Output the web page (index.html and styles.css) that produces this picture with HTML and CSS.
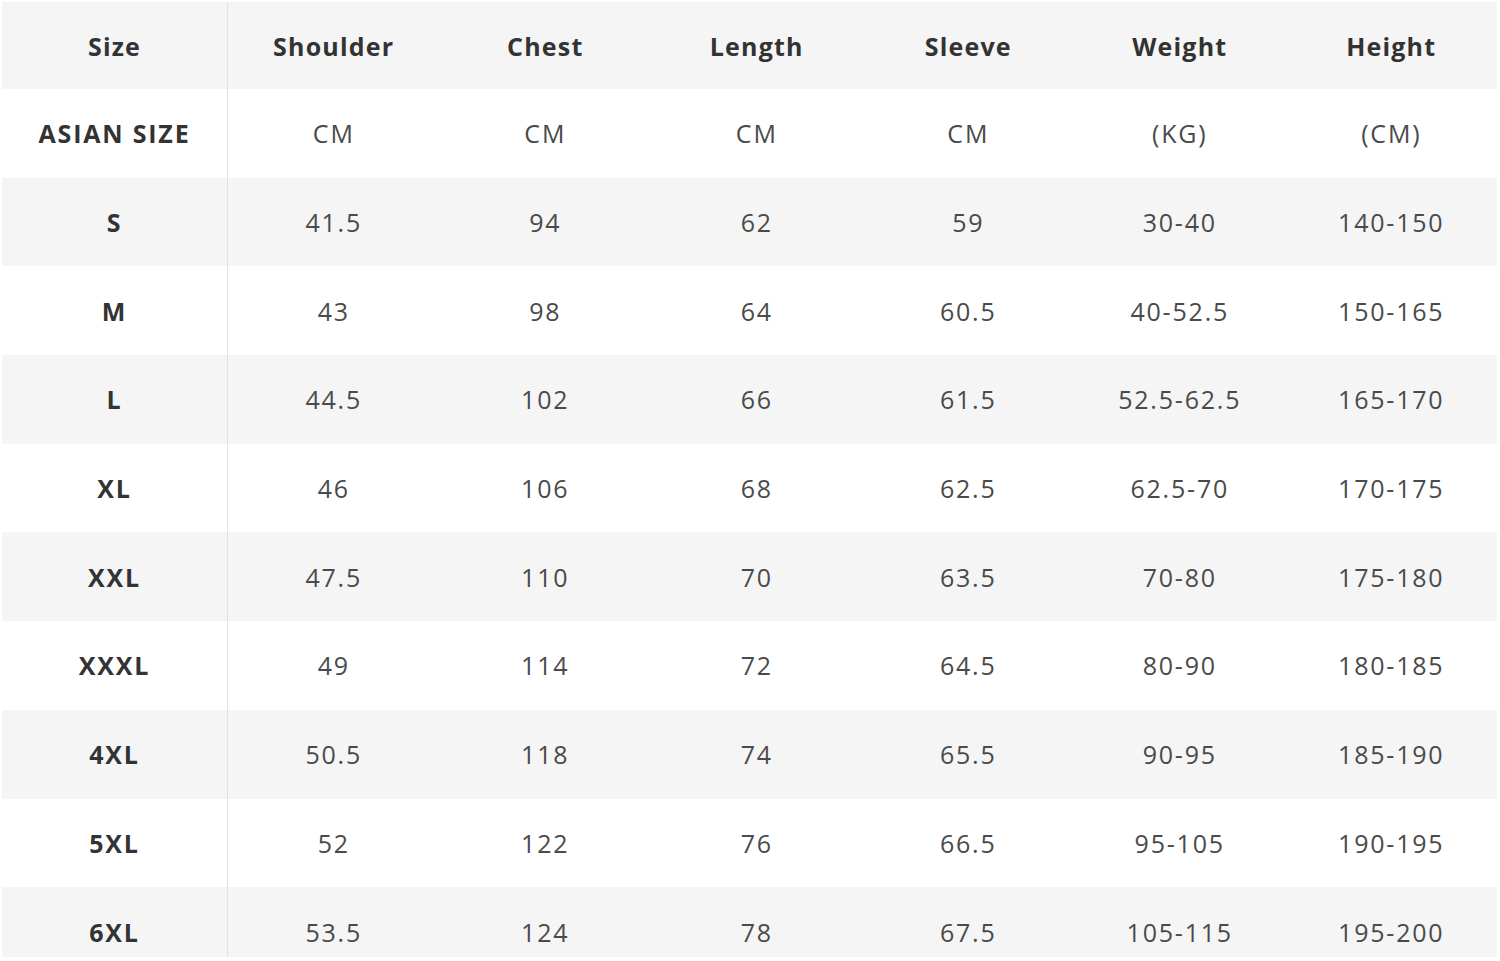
FILE: index.html
```html
<!DOCTYPE html>
<html>
<head>
<meta charset="utf-8">
<link rel="stylesheet" href="styles.css">
</head>
<body>
<div class="chart">
  <div class="row head">
    <div class="cell key">Size</div><div class="cell">Shoulder</div><div class="cell">Chest</div><div class="cell">Length</div><div class="cell">Sleeve</div><div class="cell">Weight</div><div class="cell">Height</div>
  </div>
  <div class="row">
    <div class="cell key">ASIAN SIZE</div><div class="cell">CM</div><div class="cell">CM</div><div class="cell">CM</div><div class="cell">CM</div><div class="cell">(KG)</div><div class="cell">(CM)</div>
  </div>
  <div class="row">
    <div class="cell key">S</div><div class="cell">41.5</div><div class="cell">94</div><div class="cell">62</div><div class="cell">59</div><div class="cell">30-40</div><div class="cell">140-150</div>
  </div>
  <div class="row">
    <div class="cell key">M</div><div class="cell">43</div><div class="cell">98</div><div class="cell">64</div><div class="cell">60.5</div><div class="cell">40-52.5</div><div class="cell">150-165</div>
  </div>
  <div class="row">
    <div class="cell key">L</div><div class="cell">44.5</div><div class="cell">102</div><div class="cell">66</div><div class="cell">61.5</div><div class="cell">52.5-62.5</div><div class="cell">165-170</div>
  </div>
  <div class="row">
    <div class="cell key">XL</div><div class="cell">46</div><div class="cell">106</div><div class="cell">68</div><div class="cell">62.5</div><div class="cell">62.5-70</div><div class="cell">170-175</div>
  </div>
  <div class="row">
    <div class="cell key">XXL</div><div class="cell">47.5</div><div class="cell">110</div><div class="cell">70</div><div class="cell">63.5</div><div class="cell">70-80</div><div class="cell">175-180</div>
  </div>
  <div class="row">
    <div class="cell key">XXXL</div><div class="cell">49</div><div class="cell">114</div><div class="cell">72</div><div class="cell">64.5</div><div class="cell">80-90</div><div class="cell">180-185</div>
  </div>
  <div class="row">
    <div class="cell key">4XL</div><div class="cell">50.5</div><div class="cell">118</div><div class="cell">74</div><div class="cell">65.5</div><div class="cell">90-95</div><div class="cell">185-190</div>
  </div>
  <div class="row">
    <div class="cell key">5XL</div><div class="cell">52</div><div class="cell">122</div><div class="cell">76</div><div class="cell">66.5</div><div class="cell">95-105</div><div class="cell">190-195</div>
  </div>
  <div class="row">
    <div class="cell key">6XL</div><div class="cell">53.5</div><div class="cell">124</div><div class="cell">78</div><div class="cell">67.5</div><div class="cell">105-115</div><div class="cell">195-200</div>
  </div>
</div>
</body>
</html>
```
FILE: styles.css
```css
html, body {
  margin: 0;
  padding: 0;
  background: #ffffff;
  width: 1500px;
  height: 961px;
  overflow: hidden;
}
.chart {
  margin: 2px 3px 0 2px;
  width: 1495px;
  height: 955px;
  overflow: hidden;
  font-family: "Open Sans", "Noto Sans", sans-serif;
  font-size: 25px;
  color: #4a4a4a;
}
.row {
  display: grid;
  grid-template-columns: 226px repeat(6, 1fr);
  height: 88.7px;
}
.row.head {
  height: 87px;
}
.row:nth-child(odd) {
  background: #f5f5f5;
}
.cell {
  display: flex;
  align-items: center;
  justify-content: center;
  letter-spacing: 1.8px;
}
.cell.key {
  border-right: 1px solid #e2e2e2;
  font-weight: 700;
  color: #333333;
}
.head .cell {
  font-weight: 700;
  color: #333333;
  letter-spacing: 1.2px;
}
.head .cell.key {
  letter-spacing: 1.2px;
}
```
